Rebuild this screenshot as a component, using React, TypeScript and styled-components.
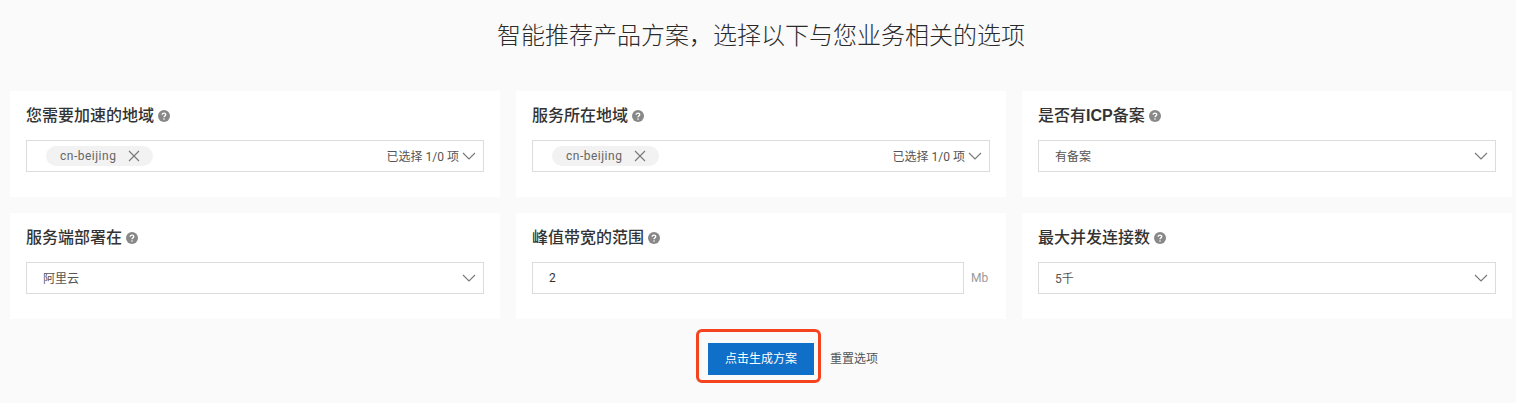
import React, { FC } from 'react';
import styled, { createGlobalStyle } from 'styled-components';

const GlobalStyle = createGlobalStyle`
  html, body {
    margin: 0;
    padding: 0;
    background: #fafafa;
    font-family: Roboto, "Noto Sans CJK SC", sans-serif;
  }
`;

const HelpIcon: FC = () => (
  <HelpSvg viewBox="0 0 12 12">
    <circle cx="6" cy="6" r="6" fill="#888" />
    <path
      d="M4.2 4.8c0-1.1.8-1.7 1.8-1.7s1.8.6 1.8 1.5c0 1.3-1.8 1.3-1.8 2.6"
      fill="none"
      stroke="#fff"
      strokeWidth="1.3"
    />
    <circle cx="6" cy="9" r=".8" fill="#fff" />
  </HelpSvg>
);

const Chevron: FC = () => (
  <ChevronSvg viewBox="0 0 14 8">
    <path d="M1 1l6 6 6-6" fill="none" stroke="#777" strokeWidth="1.1" />
  </ChevronSvg>
);

const CloseIcon: FC = () => (
  <CloseSvg viewBox="0 0 12 12">
    <path d="M1 1l10 10M11 1L1 11" fill="none" stroke="#777" strokeWidth="1.1" />
  </CloseSvg>
);

const MultiSelect: FC = () => (
  <Field>
    <Chip>
      cn-beijing
      <CloseIcon />
    </Chip>
    <Count>已选择 1/0 项</Count>
    <Chevron />
  </Field>
);

const Select: FC<{ value: string }> = ({ value }) => (
  <Field>
    <FieldValue>{value}</FieldValue>
    <Chevron />
  </Field>
);

const App: FC = () => {
  return (
    <Page>
      <GlobalStyle />
      <Title>智能推荐产品方案，选择以下与您业务相关的选项</Title>
      <Grid>
        <Card>
          <Label>
            您需要加速的地域
            <HelpIcon />
          </Label>
          <MultiSelect />
        </Card>
        <Card>
          <Label>
            服务所在地域
            <HelpIcon />
          </Label>
          <MultiSelect />
        </Card>
        <Card>
          <Label>
            是否有<LatinBold>ICP</LatinBold>备案
            <HelpIcon />
          </Label>
          <Select value="有备案" />
        </Card>
        <Card>
          <Label>
            服务端部署在
            <HelpIcon />
          </Label>
          <Select value="阿里云" />
        </Card>
        <Card>
          <Label>
            峰值带宽的范围
            <HelpIcon />
          </Label>
          <InputRow>
            <Field>
              <NumberValue>2</NumberValue>
            </Field>
            <Unit>Mb</Unit>
          </InputRow>
        </Card>
        <Card>
          <Label>
            最大并发连接数
            <HelpIcon />
          </Label>
          <Select value="5千" />
        </Card>
      </Grid>
      <Actions>
        <PrimaryButton>点击生成方案</PrimaryButton>
        <ResetLink>重置选项</ResetLink>
      </Actions>
    </Page>
  );
};

export default App;

const Page = styled.div`
  width: 1516px;
  height: 403px;
  box-sizing: border-box;
  padding: 0 4px 0 10px;
  overflow: hidden;
  background: #fafafa;
`;

const Title = styled.h1`
  margin: 0;
  height: 91px;
  padding-top: 20px;
  box-sizing: border-box;
  font-size: 24px;
  line-height: 32px;
  font-weight: 300;
  color: #2a2a2a;
  text-align: center;
`;

const Grid = styled.div`
  display: grid;
  grid-template-columns: repeat(3, 490px);
  grid-auto-rows: 106px;
  column-gap: 16px;
  row-gap: 16px;
`;

const Card = styled.div`
  background: #fff;
  padding: 14px 16px 0;
  box-sizing: border-box;
`;

const Label = styled.div`
  display: flex;
  align-items: center;
  height: 22px;
  margin-bottom: 13px;
  font-family: "Liberation Sans", "Noto Sans CJK SC", sans-serif;
  font-size: 16px;
  line-height: 22px;
  font-weight: 500;
  color: #333;
`;

const LatinBold = styled.span`
  font-weight: 700;
`;

const HelpSvg = styled.svg`
  width: 12px;
  height: 12px;
  margin-left: 4px;
  flex: none;
`;

const Field = styled.div`
  display: flex;
  align-items: center;
  flex: 1;
  height: 32px;
  box-sizing: border-box;
  border: 1px solid #dcdcdc;
  background: #fff;
  padding: 0 7px 0 16px;
  font-size: 12px;
  color: #666;
`;

const Chip = styled.span`
  display: inline-flex;
  align-items: center;
  height: 20px;
  padding: 0 13px 0 14px;
  margin-left: 3px;
  border-radius: 10px;
  background: #f2f2f2;
  font-size: 12px;
  letter-spacing: 0.5px;
  color: #666;
`;

const CloseSvg = styled.svg`
  width: 12px;
  height: 12px;
  margin-left: 12px;
`;

const Count = styled.span`
  margin-left: auto;
  margin-right: 3px;
  margin-bottom: 2px;
  font-size: 12px;
  color: #555;
`;

const FieldValue = styled.span`
  flex: 1;
  margin-bottom: 2px;
  color: #555;
`;

const NumberValue = styled.span`
  color: #333;
`;

const ChevronSvg = styled.svg`
  width: 14px;
  height: 8px;
  flex: none;
`;

const InputRow = styled.div`
  display: flex;
  align-items: center;
`;

const Unit = styled.span`
  width: 26px;
  flex: none;
  padding-left: 7px;
  box-sizing: border-box;
  font-size: 12px;
  color: #999;
`;

const Actions = styled.div`
  display: flex;
  align-items: center;
  padding: 24px 0 0 698px;
`;

const PrimaryButton = styled.button`
  position: relative;
  width: 106px;
  height: 32px;
  padding: 0 0 4px;
  border: 0;
  background: #0f6fc9;
  color: #fff;
  font-family: inherit;
  font-size: 12px;

  &::after {
    content: '';
    position: absolute;
    inset: -14px -7px -8px -12px;
    border: 3px solid #f4431f;
    border-radius: 6px;
  }
`;

const ResetLink = styled.span`
  margin-left: 16px;
  margin-bottom: 4px;
  font-size: 12px;
  color: #555;
`;
